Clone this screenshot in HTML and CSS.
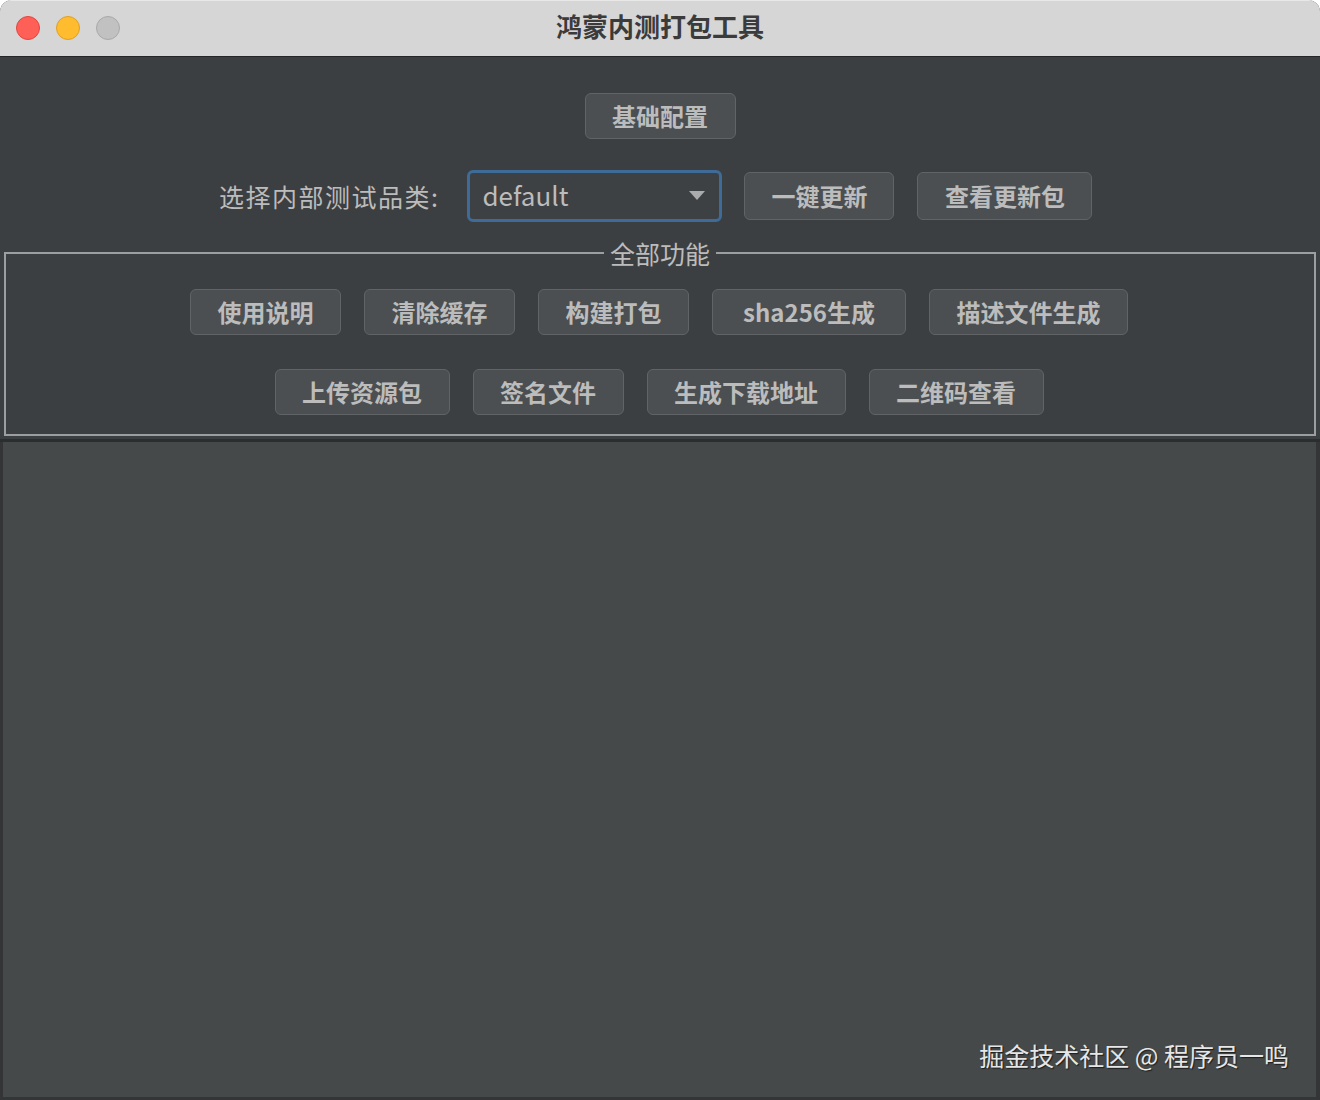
FILE: index.html
```html
<!DOCTYPE html>
<html lang="zh-CN">
<head>
<meta charset="utf-8">
<title>鸿蒙内测打包工具</title>
<link rel="stylesheet" href="styles.css">
</head>
<body>
<div class="window">
  <div class="titlebar">
    <div class="lights">
      <span class="light red"></span>
      <span class="light yellow"></span>
      <span class="light gray"></span>
    </div>
    <div class="title">鸿蒙内测打包工具</div>
  </div>
  <div class="panel">
    <div class="row row-top">
      <button class="btn">基础配置</button>
    </div>
    <div class="row row-select">
      <span class="label">选择内部测试品类:</span>
      <div class="combo">
        <span class="combo-text">default</span>
        <svg class="arrow" width="16" height="9" viewBox="0 0 16 9"><path d="M0 0 H16 L8 9 Z" fill="#a9abad"/></svg>
      </div>
      <button class="btn btn-tall">一键更新</button>
      <button class="btn btn-tall">查看更新包</button>
    </div>
    <fieldset class="group">
      <legend>全部功能</legend>
      <div class="row row-btns">
        <button class="btn">使用说明</button>
        <button class="btn">清除缓存</button>
        <button class="btn">构建打包</button>
        <button class="btn btn-latin">sha256生成</button>
        <button class="btn">描述文件生成</button>
      </div>
      <div class="row row-btns second">
        <button class="btn">上传资源包</button>
        <button class="btn">签名文件</button>
        <button class="btn">生成下载地址</button>
        <button class="btn">二维码查看</button>
      </div>
    </fieldset>
  </div>
  <div class="output">
    <div class="watermark">掘金技术社区 @ 程序员一鸣</div>
  </div>
</div>
</body>
</html>
```

FILE: styles.css
```css
* { box-sizing: border-box; }
html, body { margin: 0; padding: 0; }
body {
  background: #ffffff;
  font-family: "Noto Sans CJK SC", "Noto Sans", sans-serif;
  width: 1320px;
  height: 1100px;
  overflow: hidden;
}
.window {
  width: 1320px;
  height: 1100px;
  border-radius: 12px 12px 0 0;
  overflow: hidden;
  background: #3c3f41;
  display: flex;
  flex-direction: column;
}
.titlebar {
  height: 57px;
  flex: none;
  background: #d6d6d6;
  border-top: 1px solid #e8e8e8;
  border-bottom: 1px solid #262626;
  display: flex;
  align-items: center;
  justify-content: center;
  position: relative;
}
.lights {
  position: absolute;
  left: 16px;
  top: 15px;
  display: flex;
  gap: 16px;
}
.light {
  width: 24px;
  height: 24px;
  border-radius: 50%;
  display: block;
}
.red { background: #fe5f57; border: 1px solid #e2463f; }
.yellow { background: #febc2e; border: 1px solid #dfa023; }
.gray { background: #c1c1c1; border: 1px solid #a9a9a9; }
.title {
  font-size: 26px;
  font-weight: 700;
  color: #3b3b3b;
  line-height: 30px;
  margin-top: -5px;
}
.panel {
  flex: none;
  height: 385px;
  background: #3c3f41;
  padding-top: 36px;
  border-bottom: 3px solid #2b2d2e;
}
.row {
  display: flex;
  justify-content: center;
  align-items: center;
}
.btn {
  font-family: "Noto Sans CJK SC", "Noto Sans", sans-serif;
  font-size: 24px;
  font-weight: 700;
  color: #bcbcbc;
  background: #4b4f51;
  border: 1px solid #606466;
  border-radius: 6px;
  height: 46px;
  padding: 0 26.5px;
  line-height: 1;
  white-space: nowrap;
  display: flex;
  align-items: center;
  justify-content: center;
  margin: 0;
}
.btn-latin { padding: 0 30px; }
.btn-tall { height: 48px; padding: 0; }
.row-top .btn { width: 151px; }
.row-select {
  margin-top: 31px;
  gap: 22px;
  height: 52px;
}
.row-select .btn:nth-of-type(1) { width: 150px; }
.row-select .btn:nth-of-type(2) { width: 175px; margin-left: 1px; }
.label {
  font-size: 25px;
  letter-spacing: 1.5px;
  color: #bcbcbc;
  margin-right: 6px;
  margin-left: -8.5px;
}
.combo {
  width: 255px;
  height: 52px;
  border: 3px solid #3e6b98;
  border-radius: 6px;
  background: #3e4143;
  display: flex;
  align-items: center;
  justify-content: space-between;
  padding: 0 14px 0 12px;
}
.combo-text {
  font-size: 26px;
  color: #bcbcbc;
  line-height: 1;
  margin-top: -2px;
}
.arrow { display: block; margin-top: -2px; }
.group {
  margin: 16px 4px 0;
  border: 2px solid #9d9e9f;
  padding: 21px 0 19px;
  min-width: 0;
}
.group legend {
  font-size: 25px;
  line-height: 30px;
  color: #bcbcbc;
  padding: 0 6px;
  margin: 0 auto;
}
.row-btns { gap: 23px; margin-left: -2px; }
.row-btns.second { margin-top: 34px; }
.output {
  flex: 1;
  background: #45494a;
  border-left: 3px solid #333536;
  border-right: 4px solid #333536;
  border-bottom: 3px solid #333536;
  position: relative;
}
.watermark {
  position: absolute;
  right: 27px;
  bottom: 24px;
  font-size: 25px;
  color: #e6e6e6;
  text-shadow: 1px 1px 1px #1d1d1d;
  white-space: nowrap;
}
```
